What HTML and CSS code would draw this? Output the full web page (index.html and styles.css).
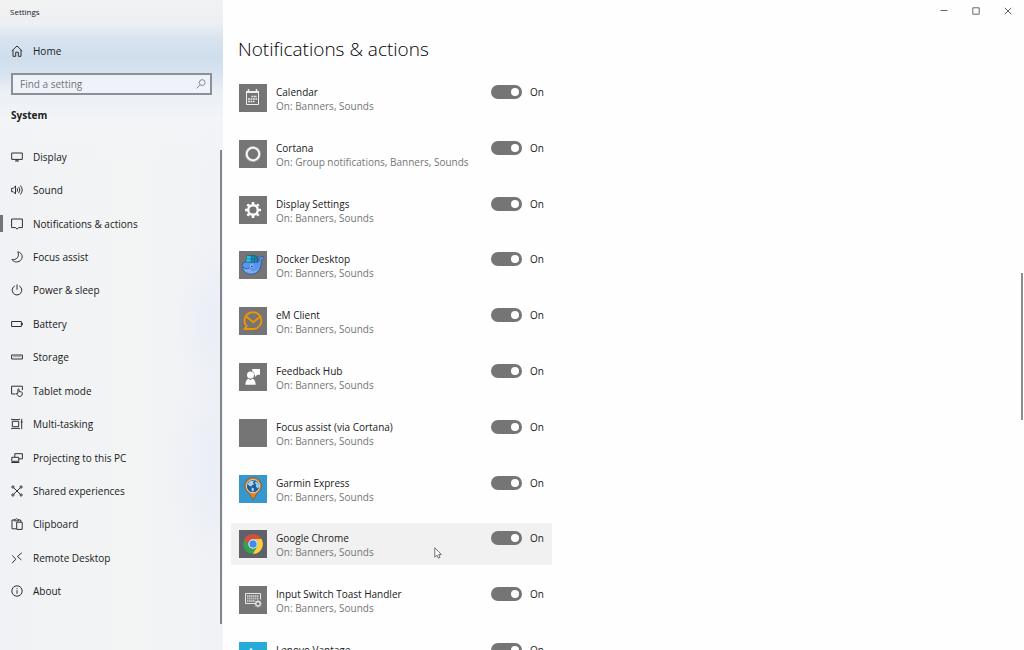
FILE: index.html
```html
<!DOCTYPE html>
<html lang="en">
<head>
<meta charset="utf-8">
<title>Settings</title>
<meta name="viewport" content="width=device-width, initial-scale=1">
<link rel="stylesheet" href="styles.css">
</head>
<body>
<div class="window">
  <aside class="sidebar">
    <div class="app-title">Settings</div>
    <a class="nav-link home" href="#">
      <svg class="icon" viewBox="0 0 12 12"><path d="M.8 6 6 1l5.200 5M2 5v6.300h2.700V7.200h2.600v4.100H10V5"/></svg>
      <span>Home</span>
    </a>
    <form class="search">
      <input class="search-input" type="search" placeholder="Find a setting" aria-label="Find a setting">
      <svg class="search-icon" viewBox="0 0 10 10"><circle cx="6.200" cy="3.600" r="2.900"/><path d="M4.100 5.800.6 9.400"/></svg>
    </form>
    <h2 class="section-title">System</h2>
    <nav class="nav" aria-label="System">
      <a class="nav-link" href="#"><svg class="icon" viewBox="0 0 12 12"><path d="M.7 2h10.600v6.400H.7zM4 10h4M6 8.400V10"/></svg><span>Display</span></a>
      <a class="nav-link" href="#"><svg class="icon" viewBox="0 0 12 12"><path d="M.6 4.300h1.600L4.500 2v8L2.200 7.700H.6zM6 4.300q1.300 1.700 0 3.400M7.700 2.900q2.300 3.100 0 6.200M9.400 1.500q3.600 4.500 0 9"/></svg><span>Sound</span></a>
      <a class="nav-link current" href="#" aria-current="page"><svg class="icon" viewBox="0 0 12 12"><path d="M.6 1h10.800v8.600H7.500L6 11.200 4.500 9.600H.6z"/></svg><span>Notifications &amp; actions</span></a>
      <a class="nav-link" href="#"><svg class="icon" viewBox="0 0 12 12"><path d="M6.800.8c5 1.100 5.700 6.400 2.300 9C6.400 11.800 2.500 11.200.9 8.500c4.200.8 8.100-2.500 5.900-7.700z"/></svg><span>Focus assist</span></a>
      <a class="nav-link" href="#"><svg class="icon" viewBox="0 0 12 12"><path d="M6 .4v5.300M3.800 1.900a4.800 4.800 0 1 0 4.400 0"/></svg><span>Power &amp; sleep</span></a>
      <a class="nav-link" href="#"><svg class="icon" viewBox="0 0 12 12"><path d="M.6 3.500h9.800v5H.6zM11.400 4.900v2.200"/></svg><span>Battery</span></a>
      <a class="nav-link" href="#"><svg class="icon" viewBox="0 0 12 12"><path d="M.6 4h10.800v4H.6z"/><path d="M2 5.600h8" class="thin"/></svg><span>Storage</span></a>
      <a class="nav-link" href="#"><svg class="icon" viewBox="0 0 12 12"><path d="M4.500 9H.6V1.200h10.800v4M6.900 8V4.300q.7-.9 1.200 0V6.500l2.500.5q.8.300.8 1.200 0 3-2.300 3.300H8.300Q7 11.200 5.300 8.700q.3-1.200 1.600 0"/></svg><span>Tablet mode</span></a>
      <a class="nav-link" href="#"><svg class="icon" viewBox="0 0 12 12"><path d="M1.300 3.300h6.400v5.400H1.300zM.5.8v.8h8V.8M.5 11.200v-.8h8v.8M10.700.8V3M10.700 5v6.200"/><circle class="solid" cx="10.700" cy="4" r="1"/></svg><span>Multi-tasking</span></a>
      <a class="nav-link" href="#"><svg class="icon" viewBox="0 0 12 12"><path d="M3.800 5.300V1.700h7.600v5.200H7.800M.8 5.300h7v4H.8zM.3 10.500h8"/></svg><span>Projecting to this PC</span></a>
      <a class="nav-link" href="#"><svg class="icon" viewBox="0 0 12 12"><path d="M2.600 2.700 9.400 9.300M9.400 2.700 2.600 9.300"/><circle cx="1.900" cy="2" r="1.100"/><circle cx="10.100" cy="2" r="1.100"/><circle cx="1.900" cy="10" r="1.100"/><circle cx="10.100" cy="10" r="1.100"/></svg><span>Shared experiences</span></a>
      <a class="nav-link" href="#"><svg class="icon" viewBox="0 0 12 12"><path d="M5.200 10.800H1V2h2.200M7.600 2h2.200v2M3.300 2.900V1.400h1.200q.9-1.600 1.800 0h1.200v1.500zM5.700 4.200h5.500v7.200H5.700z"/></svg><span>Clipboard</span></a>
      <a class="nav-link" href="#"><svg class="icon" viewBox="0 0 12 12"><path d="m1.200 3.500 3.700 3.700L1 11.200M10.800.8 6.400 4.500l4 3.400"/></svg><span>Remote Desktop</span></a>
      <a class="nav-link" href="#"><svg class="icon" viewBox="0 0 12 12"><circle cx="6" cy="6" r="5.200"/><path d="M6 5.200v3.600M6 3.200v1"/></svg><span>About</span></a>
    </nav>
    <div class="sidebar-thumb"></div>
  </aside>

  <main class="content">
    <div class="window-buttons">
      <button class="window-button" type="button" aria-label="Minimize"><svg viewBox="0 0 8 8"><path d="M.5 3.500h7"/></svg></button>
      <button class="window-button" type="button" aria-label="Maximize"><svg viewBox="0 0 8 8"><path d="M.8.8h6.400v6.400H.8z"/></svg></button>
      <button class="window-button" type="button" aria-label="Close"><svg viewBox="0 0 8 8"><path d="m.8.8 6.400 6.400M7.200.8.8 7.200"/></svg></button>
    </div>
    <h1 class="page-title">Notifications &amp; actions</h1>
    <ul class="apps">
      <li class="app">
        <svg class="app-icon" viewBox="0 0 28 28"><g fill="none" stroke="#f0f0f0"><path d="M7.500 8h12v12.500h-12z"/><path d="M7 8h13" stroke-width="2"/><path d="M9.500 5v3M17.500 5v3" stroke-width="1.500"/><path d="M12.500 12.500h5.500M9 15h9M9 17.500h6.500" stroke-width="1.600" stroke-dasharray="1.800 .7"/></g></svg>
        <label class="app-text" for="calendar"><span class="app-name">Calendar</span><span class="app-state">On: Banners, Sounds</span></label>
        <span class="switch"><input id="calendar" type="checkbox" role="switch" checked><span>On</span></span>
      </li>
      <li class="app">
        <svg class="app-icon" viewBox="0 0 28 28"><circle cx="14" cy="14" r="6.500" fill="none" stroke="#fff" stroke-opacity=".35" stroke-width="3"/><circle cx="14" cy="14" r="6.300" fill="none" stroke="#fff" stroke-width="1.700"/></svg>
        <label class="app-text" for="cortana"><span class="app-name">Cortana</span><span class="app-state">On: Group notifications, Banners, Sounds</span></label>
        <span class="switch"><input id="cortana" type="checkbox" role="switch" checked><span>On</span></span>
      </li>
      <li class="app">
        <svg class="app-icon" viewBox="0 0 28 28"><g stroke="#fff" fill="none"><circle cx="14" cy="14" r="4.800" stroke-width="2.400"/><path stroke-width="2.600" d="M14 6v2.500M14 19.500V22M6 14h2.500M19.500 14H22M8.300 8.300l1.900 1.900M17.800 17.800l1.900 1.900M8.300 19.700l1.900-1.900M17.800 10.200l1.900-1.900"/></g></svg>
        <label class="app-text" for="display-settings"><span class="app-name">Display Settings</span><span class="app-state">On: Banners, Sounds</span></label>
        <span class="switch"><input id="display-settings" type="checkbox" role="switch" checked><span>On</span></span>
      </li>
      <li class="app">
        <svg class="app-icon" viewBox="0 0 28 28"><path d="M6.500 11.500 8 5l8-.5 2.500 3v4z" fill="#168fb4" stroke="#134f69" stroke-width=".7"/><path d="m8 5 4 .3v5.500l-5.200.4z" fill="#31c5de"/><path d="M12 5.300V11M15.500 5v6M7.500 8h11" stroke="#135975" stroke-width=".5"/><path d="M3.300 12.500 6 11l13 .2c1.200-1 1.400-2 1.300-3.200-1.700-.4-2.300-1.500-2.300-2.400 1.300 0 2.500.3 3.200 1 .7-1 2-1.400 3.600-1-.1 1.800-.9 2.700-2.300 3.100 0 9.300-3.500 14.400-10.500 14.400-5.700 0-9.200-4.200-8.700-10.600z" fill="#5797ed" stroke="#234f9b" stroke-width=".7"/><path d="M4 15.500c1.500 2 3.500 2.500 6 1.500l3 3.500c2.500-.2 5-1.300 7.300-3.500-1.800 4-5 5.600-8.500 5.500-4.500-.2-7.300-2.800-7.800-7z" fill="#7fadf1"/><path d="M4 16c1.800 2 4 2.300 6.500 1" fill="none" stroke="#234f9b" stroke-width=".8"/><circle cx="12.800" cy="15" r="1.500" fill="#fff"/><circle cx="12.900" cy="15.200" r="1" fill="#193769"/></svg>
        <label class="app-text" for="docker"><span class="app-name">Docker Desktop</span><span class="app-state">On: Banners, Sounds</span></label>
        <span class="switch"><input id="docker" type="checkbox" role="switch" checked><span>On</span></span>
      </li>
      <li class="app">
        <svg class="app-icon" viewBox="0 0 28 28"><g fill="none" stroke="#f59300" stroke-width="1.800" stroke-linejoin="round"><path d="M6.500 17.500A8.400 8.400 0 1 1 14.500 22H5.200l2.600-2.700-1.300-1.800z"/><path d="m7.500 9.700 6.800 5.500 6.800-5.500"/></g></svg>
        <label class="app-text" for="em-client"><span class="app-name">eM Client</span><span class="app-state">On: Banners, Sounds</span></label>
        <span class="switch"><input id="em-client" type="checkbox" role="switch" checked><span>On</span></span>
      </li>
      <li class="app">
        <svg class="app-icon" viewBox="0 0 28 28"><g fill="#fff"><circle cx="11.500" cy="12" r="3.500"/><path d="M6.300 21.800c.2-4 1.700-5.700 3.200-6.100l2 1.300 2-1.300c1.500.4 3 2.100 3.200 6.100zM13.200 6H21v5.700h-2.700L16 14v-2.300h-.6c0-1.600-.7-2.900-2.200-3.500z"/></g></svg>
        <label class="app-text" for="feedback"><span class="app-name">Feedback Hub</span><span class="app-state">On: Banners, Sounds</span></label>
        <span class="switch"><input id="feedback" type="checkbox" role="switch" checked><span>On</span></span>
      </li>
      <li class="app">
        <svg class="app-icon" viewBox="0 0 28 28"></svg>
        <label class="app-text" for="focus"><span class="app-name">Focus assist (via Cortana)</span><span class="app-state">On: Banners, Sounds</span></label>
        <span class="switch"><input id="focus" type="checkbox" role="switch" checked><span>On</span></span>
      </li>
      <li class="app">
        <svg class="app-icon sky" viewBox="0 0 28 28"><path d="M14 24.500 9.800 18a8.300 8.300 0 1 1 8.400 0z" fill="#e9851c" stroke="#8b5520" stroke-width=".8"/><circle cx="14" cy="11.200" r="6.600" fill="#1d5c9b" stroke="#d3dce2" stroke-width="1"/><path d="m8.500 9 3-3.300 3.300.3-.8 2 1.500 1.500-2.500.5-.5 1.500-2-.5zM12.500 12.500l2.700 1-.8 3-1.700-.5zM16.500 6.500l3 2 .5 3-1.500 2-1.700-2.500.7-1.700-1.500-.8z" fill="#a8d3e8"/></svg>
        <label class="app-text" for="garmin"><span class="app-name">Garmin Express</span><span class="app-state">On: Banners, Sounds</span></label>
        <span class="switch"><input id="garmin" type="checkbox" role="switch" checked><span>On</span></span>
      </li>
      <li class="app hovered">
        <svg class="app-icon slate" viewBox="0 0 28 28"><circle cx="14" cy="14" r="9.800" fill="#31a350"/><path d="M5.510 9.100A9.800 9.800 0 0 1 22.490 9.100H14a4.900 4.900 0 0 0-4.240 7.350z" fill="#dd4b3e"/><path d="M22.490 9.100A9.800 9.800 0 0 1 14 23.800l4.240-7.350A4.900 4.900 0 0 0 14 9.100z" fill="#ffcd40"/><circle cx="14" cy="14" r="4.700" fill="#fff"/><circle cx="14" cy="14" r="3.700" fill="#4688f1"/></svg>
        <label class="app-text" for="chrome"><span class="app-name">Google Chrome</span><span class="app-state">On: Banners, Sounds</span></label>
        <span class="switch"><input id="chrome" type="checkbox" role="switch" checked><span>On</span></span>
        <svg class="pointer" viewBox="0 0 8 12"><path d="M.8.8v9.400L3 8.200l1.400 3 1.600-.8-1.300-2.800h2.700z"/></svg>
      </li>
      <li class="app">
        <svg class="app-icon" viewBox="0 0 28 28"><g fill="none" stroke="#e6e6e6"><path d="M16 17.500H6.500v-10h15v6"/><path d="M8 10h12M8 12.500h12M8 15h8" stroke="#c4c4c4" stroke-width="1.800" stroke-dasharray="1.500 .5"/><circle cx="19" cy="17.700" r="2.200" stroke-width="1.300"/><path d="M19 14v1.500M19 20v1.500M15.300 17.700h1.500M21.200 17.700h1.500M16.400 15.100l1 1M20.600 19.300l1 1M16.400 20.300l1-1M20.600 16.100l1-1"/></g></svg>
        <label class="app-text" for="input-switch"><span class="app-name">Input Switch Toast Handler</span><span class="app-state">On: Banners, Sounds</span></label>
        <span class="switch"><input id="input-switch" type="checkbox" role="switch" checked><span>On</span></span>
      </li>
      <li class="app">
        <svg class="app-icon cyan" viewBox="0 0 28 28"><path d="M12 6.500v14h7" fill="none" stroke="#fff" stroke-width="2.500"/></svg>
        <label class="app-text" for="lenovo"><span class="app-name">Lenovo Vantage</span><span class="app-state">On: Banners, Sounds</span></label>
        <span class="switch"><input id="lenovo" type="checkbox" role="switch" checked><span>On</span></span>
      </li>
    </ul>
    <div class="page-thumb"></div>
  </main>
</div>
</body>
</html>
```
FILE: styles.css
```css
* {
  box-sizing: border-box;
}

body {
  margin: 0;
  background: #fefefe;
  color: #202020;
  font: 10px/14px "Open Sans", "Noto Sans", sans-serif;
}

.window {
  display: flex;
  height: 100vh;
  overflow: hidden;
}

/* Sidebar */
.sidebar {
  position: relative;
  display: flex;
  flex: 0 0 223px;
  flex-direction: column;
  padding-bottom: 42px;
  background:
    radial-gradient(ellipse 50px 90px at 100% 50%, #e9edf7, #e9edf700),
    radial-gradient(ellipse 60px 110px at 100% 72%, #e9edf7, #e9edf700),
    linear-gradient(#f2f2f2 0, #eceff3 24px, #d7e3ef 40px, #cfdeec 58px, #d9e4f0 76px, #ebf0f7 92px, #f2f4f7 118px, #f2f4f700 170px),
    linear-gradient(90deg, #f0f2f5, #f3f4f4 60%, #f0f2f6);
}

.app-title {
  padding: 5px 10px 4px;
  font-size: 8px;
}

.nav-link {
  display: flex;
  align-items: center;
  gap: 10px;
  padding: 0 11px;
  color: inherit;
  text-decoration: none;
}

.icon {
  width: 12px;
  height: 12px;
  fill: none;
  stroke: #303030;
  stroke-width: 1;
}

.icon .thin {
  stroke: #a0a0a0;
}

.icon .solid {
  fill: #303030;
  stroke: none;
}

.home {
  height: 56px;
}

.search {
  position: relative;
  margin: -6px 11px 0;
}

.search-input {
  display: block;
  width: 100%;
  height: 22px;
  padding: 0 24px 0 7px;
  border: 2px solid #8c9197;
  border-radius: 0;
  background: #eff3f9;
  color: #202020;
  font: inherit;
  appearance: none;
}

.search-input::placeholder {
  color: #70757a;
  opacity: 1;
}

.search-icon {
  position: absolute;
  top: 6px;
  right: 6px;
  width: 10px;
  height: 10px;
  fill: none;
  stroke: #85898e;
}

.section-title {
  margin: 13px 11px 18px;
  font-size: 10px;
  font-weight: 700;
}

.nav {
  display: flex;
  flex: 1;
  flex-direction: column;
}

.nav .nav-link {
  position: relative;
  flex: 1;
}

.current::before {
  position: absolute;
  left: 0;
  width: 3px;
  height: 17px;
  background: #757575;
  content: "";
}

.sidebar-thumb {
  position: absolute;
  top: 150px;
  right: 1px;
  bottom: 26px;
  width: 2px;
  background: #858689;
}

/* Content */
.content {
  position: relative;
  display: flex;
  flex: 1;
  flex-direction: column;
}

.window-buttons {
  display: flex;
  justify-content: flex-end;
}

.window-button {
  width: 32px;
  height: 22px;
  padding: 0;
  border: 0;
  background: none;
}

.window-button svg {
  display: block;
  width: 8px;
  height: 8px;
  margin: auto;
  fill: none;
  stroke: #666;
}

.page-title {
  margin: 13px 15px 14px;
  color: #000;
  font-size: 19px;
  font-weight: 300;
  line-height: 28px;
}

.apps {
  display: flex;
  flex: 1;
  flex-direction: column;
  justify-content: space-between;
  width: 321px;
  margin: 0 8px -27px;
  padding: 0;
  list-style: none;
}

.app {
  position: relative;
  display: flex;
  gap: 9px;
  padding: 7px 8px 6px;
}

.hovered {
  background: #f1f1f1;
}

.app-icon {
  flex: none;
  width: 28px;
  height: 28px;
  background: #757575;
}

.sky {
  background: #3497ce;
}

.slate {
  background: #5e6268;
}

.cyan {
  background: #26abd8;
}

.app-text {
  display: flex;
  flex: 1;
  flex-direction: column;
  padding-top: 1px;
  white-space: nowrap;
}

.app-state {
  color: #757575;
}

.switch {
  display: flex;
  align-items: center;
  align-self: flex-start;
  gap: 8px;
  padding-top: 1px;
}

.switch input {
  display: flex;
  align-items: center;
  justify-content: flex-end;
  width: 31px;
  height: 14px;
  margin: 0;
  padding: 0 3px;
  border-radius: 7px;
  background: #757575;
  appearance: none;
}

.switch input::before {
  width: 8px;
  height: 8px;
  border-radius: 50%;
  background: #fff;
  content: "";
}

.pointer {
  position: absolute;
  top: 24px;
  left: 203px;
  width: 8px;
  height: 12px;
  fill: #fff;
  stroke: #707070;
}

.page-thumb {
  position: absolute;
  top: 42%;
  right: 1px;
  width: 2px;
  height: 147px;
  background: #8d8d8d;
}
```
